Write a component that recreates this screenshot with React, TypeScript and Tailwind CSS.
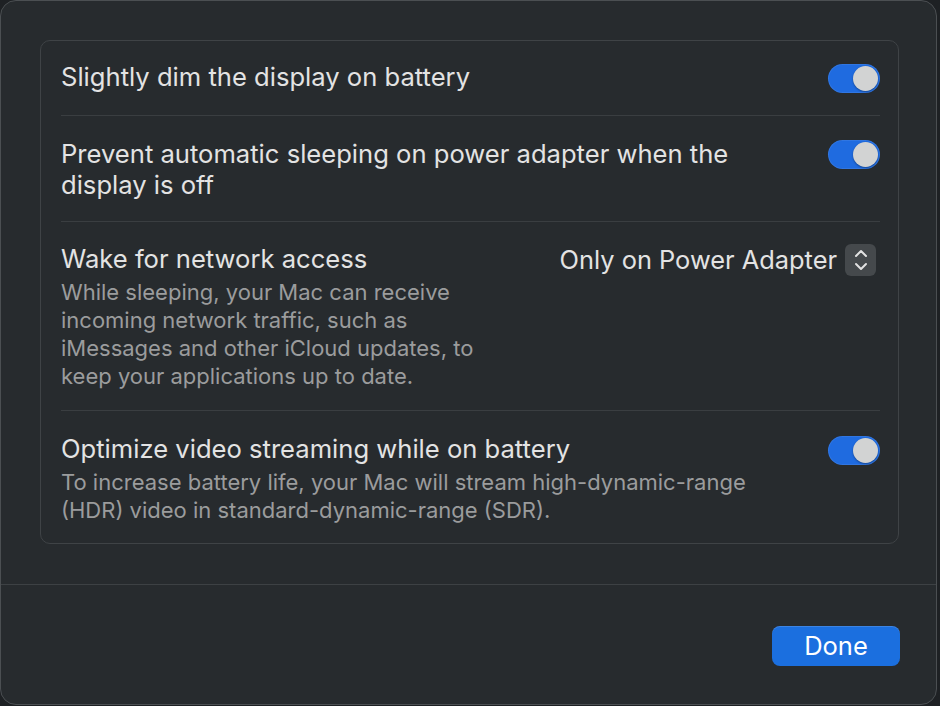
import React from 'react';

const font = { fontFamily: 'Inter, "Noto Sans", sans-serif' };

function Toggle() {
  return (
    <div className="mt-[2px] flex h-[29px] w-[52px] shrink-0 items-center justify-end rounded-full bg-[#1f6be0] pr-[2px] shadow-[inset_0_0_0_1px_rgba(255,255,255,0.08)]">
      <div className="h-[25px] w-[25px] rounded-full bg-[#d2d3d3] shadow-[0_1px_2px_rgba(0,0,0,0.35)]" />
    </div>
  );
}

function Stepper() {
  return (
    <div className="flex h-[32px] w-[31px] items-center justify-center rounded-[6px] bg-[#45494c]">
      <svg width="16" height="26" viewBox="0 0 16 26" fill="none" stroke="#e2e2e2" strokeWidth="2" strokeLinecap="round" strokeLinejoin="round">
        <path d="M3 9 L8 4 L13 9" />
        <path d="M3 17 L8 22 L13 17" />
      </svg>
    </div>
  );
}

function Divider() {
  return <div className="h-px bg-[#3a3e41]" />;
}

export default function App() {
  return (
    <div className="h-[706px] w-[940px] bg-[#1e2124]" style={font}>
      <div className="flex h-[705px] w-[937px] flex-col rounded-[16px] border border-[#4b4f52] bg-[#272b2e]">
        <div className="pl-[39px] pr-[37px] pt-[39px]">
          <div className="rounded-[10px] border border-[#3f4346] bg-[#272b2e] pl-[20px] pr-[18px]">
            <div className="flex items-start justify-between pb-[22px] pt-[21px]">
              <div className="text-[25.6px] leading-[30px] text-[#e3e3e3]">Slightly dim the display on battery</div>
              <Toggle />
            </div>
            <Divider />
            <div className="flex items-start justify-between pb-[21px] pt-[22px]">
              <div className="w-[700px] text-[25.6px] leading-[31px] text-[#e3e3e3]">
                Prevent automatic sleeping on power adapter when the display is off
              </div>
              <Toggle />
            </div>
            <Divider />
            <div className="flex items-start justify-between pb-[20px] pt-[22px]">
              <div className="w-[440px]">
                <div className="text-[25.6px] leading-[30px] text-[#e3e3e3]">Wake for network access</div>
                <div className="mt-[4px] text-[22px] leading-[28px] text-[#9b9c9d]">
                  While sleeping, your Mac can receive incoming network traffic, such as iMessages and other iCloud updates, to keep your applications up to date.
                </div>
              </div>
              <div className="mr-[4px] flex items-center gap-[8px]">
                <span className="text-[25.4px] leading-[30px] text-[#e3e3e3]">Only on Power Adapter</span>
                <Stepper />
              </div>
            </div>
            <Divider />
            <div className="flex items-start justify-between pb-[19px] pt-[23px]">
              <div>
                <div className="text-[25.6px] leading-[30px] text-[#e3e3e3]">Optimize video streaming while on battery</div>
                <div className="mt-[4px] w-[720px] text-[22px] leading-[28px] text-[#9b9c9d]">
                  To increase battery life, your Mac will stream high-dynamic-range (HDR) video in standard-dynamic-range (SDR).
                </div>
              </div>
              <Toggle />
            </div>
          </div>
        </div>
        <div className="mt-[40px] h-px bg-[#3d4144]" />
        <div className="flex flex-1 items-start justify-end pr-[36px] pt-[41px]">
          <button className="h-[40px] w-[128px] rounded-[8px] bg-[#1b6fdf] text-[25.5px] leading-[40px] text-white shadow-[inset_0_1px_0_rgba(255,255,255,0.15)]">
            Done
          </button>
        </div>
      </div>
    </div>
  );
}
